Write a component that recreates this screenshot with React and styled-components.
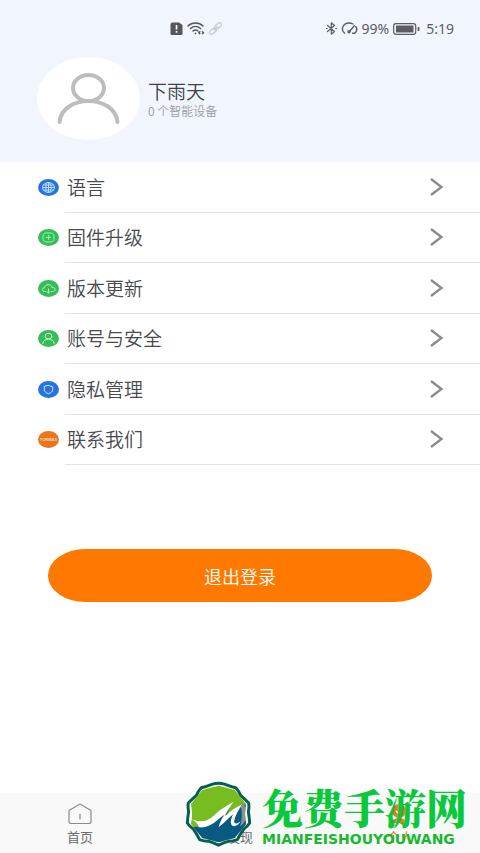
import React from "react";
import styled, { createGlobalStyle } from "styled-components";

const GlobalStyle = createGlobalStyle`
  * { box-sizing: border-box; }
  body {
    margin: 0;
    background: #fff;
    font-family: "Noto Sans CJK SC", sans-serif;
    font-weight: 350;
    color: #4f5156;
  }
  button { font-family: inherit; font-weight: inherit; border: 0; cursor: pointer; }
`;

const Screen = styled.div`
  display: flex;
  flex-direction: column;
  min-height: 100vh;
`;

const Header = styled.header`
  background: #f1f5fe;
  padding-bottom: 22px;
`;

const StatusBar = styled.div`
  display: flex;
  justify-content: space-between;
  align-items: center;
  height: 57px;
  padding: 0 26px 0 170px;
  color: #5b5d62;
  font: 400 14px/20px "Noto Sans", sans-serif;
`;

const StatusGroup = styled.div`
  display: flex;
  align-items: center;
  gap: 4px;
`;

const Clock = styled.time`
  margin-left: 2px;
`;

const Profile = styled.div`
  display: flex;
  align-items: center;
  gap: 8px;
  padding-left: 37px;
`;

const AvatarIcon = styled.svg`
  display: block;
  width: 103px;
  height: 83px;
`;

const UserName = styled.h1`
  margin: 0;
  font-size: 19px;
  line-height: 24px;
  font-weight: 350;
  color: #404248;
`;

const DeviceCount = styled.p`
  margin: 0;
  font-size: 12px;
  line-height: 16px;
  color: #999da6;
`;

const Menu = styled.nav`
  display: grid;
  grid-auto-rows: 1fr;
  min-height: 303px;
`;

const MenuRow = styled.button`
  display: flex;
  align-items: stretch;
  padding: 0 0 0 38px;
  background: none;
  text-align: left;
`;

const Badge = styled.svg`
  flex: none;
  align-self: center;
  width: 21px;
  height: 17px;
  margin-right: 6px;
`;

const RowBody = styled.span`
  flex: 1;
  display: flex;
  align-items: center;
  justify-content: space-between;
  padding: 0 36px 0 2px;
  border-bottom: 1px solid #e3e3e5;
  font-size: 19px;
  line-height: 26px;
  color: #484a4e;
`;

const LogoutButton = styled.button`
  height: 53px;
  margin: 84px 48px 40px;
  border-radius: 38px / 27px;
  background: #ff7900;
  color: #fff;
  font-size: 18px;
  line-height: 24px;
`;

const TabBar = styled.nav`
  position: relative;
  display: grid;
  grid-template-columns: repeat(3, 1fr);
  height: 60px;
  margin-top: auto;
  background: #f9f9f9;
`;

const Tab = styled.button`
  display: flex;
  flex-direction: column;
  align-items: center;
  gap: 3px;
  padding: 9px 0 0;
  background: none;
  color: ${(p) => (p.$active ? "#f47328" : "#6b6c70")};
  font-size: 13px;
  font-weight: 400;
  line-height: 16px;
`;

const Watermark = styled.div`
  position: absolute;
  right: 13px;
  bottom: 6px;
  display: flex;
  align-items: center;
  gap: 10px;
  color: #08c83c;
  pointer-events: none;
`;

const WatermarkLogo = styled.svg`
  width: 67px;
  height: 66px;
`;

const WatermarkText = styled.div`
  white-space: nowrap;
`;

const WatermarkTitle = styled.div`
  font: 900 41px/48px "Noto Serif CJK SC", "Noto Sans CJK SC", serif;
`;

const WatermarkUrl = styled.div`
  margin-top: 2px;
  font: 700 14px/12px "DejaVu Sans", sans-serif;
  color: #16b92f;
`;

const line = {
  fill: "none",
  stroke: "currentColor",
  strokeLinecap: "round",
  strokeLinejoin: "round",
};

const glyphs = {
  globe: (
    <>
      <ellipse cx="10.5" cy="8.5" rx="6" ry="5" />
      <ellipse cx="10.5" cy="8.5" rx="2.7" ry="5" />
      <path d="M4.5 8.5h12M10.5 3.5v10M5.5 6h10M5.5 11h10" />
    </>
  ),
  chip: (
    <>
      <rect x="5" y="4" width="11" height="9" rx="3" strokeDasharray="3 .7" />
      <path d="M10.5 6.3v4M8.2 8.3h4.6" />
    </>
  ),
  cloud: (
    <>
      <path d="M8 11.5H6.7C3.7 11.5 3.8 7.7 6.7 7.7 7 3.8 13 3.5 14 7.3c4-.1 4 4.2.7 4.2H13" />
      <path d="M10.5 9v4M9 11.8l1.5 1.2 1.5-1.2" />
    </>
  ),
  person: (
    <>
      <ellipse cx="10.5" cy="6.2" rx="3.4" ry="2.9" />
      <path d="M4.8 13.5c.5-6 10.9-6 11.4 0" />
    </>
  ),
  shield: <path d="M10.5 4.5l4.2 1.2v3.2c0 1.8-2 3-4.2 3.8-2.2-.8-4.2-2-4.2-3.8V5.7z" />,
};

const items = [
  { label: "语言", icon: "globe", color: "#2874df", ink: "#b9dcff" },
  { label: "固件升级", icon: "chip", color: "#38bc5b", ink: "#8dff9a" },
  { label: "版本更新", icon: "cloud", color: "#38bc5b", ink: "#a3ffb0" },
  { label: "账号与安全", icon: "person", color: "#38bc5b", ink: "#c2ffcc" },
  { label: "隐私管理", icon: "shield", color: "#2874df", ink: "#cae3ff" },
  { label: "联系我们", icon: "brand", color: "#e8761f", ink: "#ffd9b0" },
];

function MenuBadge({ icon, color, ink }) {
  return (
    <Badge viewBox="0 0 21 17" aria-hidden="true">
      <ellipse cx="10.5" cy="8.5" rx="10.5" ry="8.5" fill={color} />
      {icon === "brand" ? (
        <text x="10.5" y="10" textAnchor="middle" fontSize="4" fontWeight="700" fontFamily="Liberation Sans, sans-serif" fill={ink}>TORMAS</text>
      ) : (
        <g {...line} stroke={ink} strokeWidth="1">{glyphs[icon]}</g>
      )}
    </Badge>
  );
}

function Chevron() {
  return (
    <svg width="15" height="18" viewBox="0 0 15 18" aria-hidden="true">
      <path d="M2 1l10.5 8L2 17" fill="none" stroke="#8b8b8d" strokeWidth="2.3" />
    </svg>
  );
}

function SimIcon() {
  return (
    <svg width="13" height="13" viewBox="0 0 13 13" aria-hidden="true">
      <path d="M2.5 0.5H9L12.5 3v8.500q0 1.500-1.500 1.500H2Q.5 13 .5 11.500v-9q0-2 2-2z" fill="#55575b" />
      <path d="M6.500 3v4.500M6.500 9v1.700" stroke="#fff" strokeWidth="1.600" />
    </svg>
  );
}

function WifiIcon() {
  return (
    <svg width="18" height="13" viewBox="0 0 18 13" aria-hidden="true">
      <g {...line} stroke="#55575b" strokeWidth="1.500">
        <path d="M1 4c4-4 11-4 15 0M3.500 6.500c3-2.700 7-2.700 10 0M6 9c1.500-1.300 3.500-1.300 5 0" />
        <path d="M8.500 11.300v.1M12.800 9.800l-1 .9 1 .9M15.500 9.800l1 .9-1 .9" />
      </g>
    </svg>
  );
}

function LinkIcon() {
  return (
    <svg width="13" height="13" viewBox="0 0 13 13" aria-hidden="true">
      <g fill="none" stroke="#c3c6ce" strokeWidth="1.200">
        <rect x="5.500" y="2" width="7.500" height="4" rx="2" transform="rotate(-42 9 4)" />
        <rect x="0" y="7" width="7.500" height="4" rx="2" transform="rotate(-42 4 9)" />
        <path d="M4.500 8.500l4-4" />
      </g>
    </svg>
  );
}

function BluetoothIcon() {
  return (
    <svg width="11" height="13" viewBox="0 0 11 13" aria-hidden="true">
      <path d="M1.500 3.500l7 6-3.200 2.700V.8l3.200 2.700-7 6" {...line} strokeWidth="1.200" />
      <path d="M.5 6.500h.6M9.700 6.500h.6" {...line} strokeWidth="1.200" />
    </svg>
  );
}

function GaugeIcon() {
  return (
    <svg width="17" height="13" viewBox="0 0 17 13" aria-hidden="true">
      <g {...line} strokeWidth="1.400">
        <path d="M3.500 11.300C-1 7 2.500 1 8 1c1.700 0 3 .4 4 1M14.800 4.500c1.700 2.500.8 5.200-1.200 6.800h-2" />
        <path d="M8.500 9.500l4.800-5.800" />
        <circle cx="8" cy="9.700" r="1" />
      </g>
    </svg>
  );
}

function BatteryIcon() {
  return (
    <svg width="27" height="12" viewBox="0 0 27 12" aria-hidden="true">
      <rect x=".7" y=".7" width="22" height="10.600" rx="2.200" fill="none" stroke="currentColor" strokeWidth="1.200" />
      <rect x="3" y="2.500" width="17.500" height="7" fill="currentColor" />
      <path d="M25.500 4v4" stroke="currentColor" strokeWidth="1.800" />
    </svg>
  );
}

function HomeIcon() {
  return (
    <svg width="26" height="24" viewBox="0 0 26 24" aria-hidden="true">
      <path d="M2 8.500L13 2l11 6.500v11q0 2-2 2H4q-2 0-2-2zM13 12v5" {...line} stroke="#8a8b8e" strokeWidth="1.200" />
    </svg>
  );
}

function DiscoverIcon() {
  return (
    <svg width="26" height="24" viewBox="0 0 26 24" aria-hidden="true">
      <circle cx="11" cy="12" r="8" {...line} />
      <path d="M17 17l6 3" {...line} strokeWidth="2" />
    </svg>
  );
}

function ProfileIcon() {
  return (
    <svg width="26" height="24" viewBox="0 0 26 24" aria-hidden="true">
      <ellipse cx="12" cy="9" rx="7" ry="7" fill="#f47328" />
      <path d="M5 21q1-5 7-5t7 5z" fill="#f47328" />
      <path d="M9 9q3 4 6 0" fill="none" stroke="#fff" strokeWidth="1.500" />
    </svg>
  );
}

function SiteLogo() {
  return (
    <WatermarkLogo viewBox="42 33 202 198" aria-hidden="true">
      <defs>
        <clipPath id="logo-inner">
          <path d="M143 47Q167 52 192 60 208 80 226 102 220 132 226 162 208 184 192 204 167 210 143 217 119 210 94 204 78 184 60 162 66 132 60 102 78 80 94 60 119 52 143 47z" />
        </clipPath>
      </defs>
      <path
        d="M125 42Q143 36 161 42 178 49 195 53 205 64 209 75 222 87 234 99 236 112 233 125 236 142 237 159 230 170 219 177 209 192 200 209 187 214 174 214 158 219 143 226 128 219 112 214 99 214 86 209 77 192 67 177 56 170 49 159 50 142 53 125 50 112 52 99 64 87 77 75 81 64 91 53 108 49 125 42z"
        fill="#fff"
        stroke="#075e54"
        strokeWidth="9"
        strokeLinejoin="round"
      />
      <g clipPath="url(#logo-inner)">
        <path d="M40 30h210v200H40z" fill="#78bd20" />
        <path d="M56 170C102 176 126 150 150 122l28-12-10 26 46-36 36 20v120H56z" fill="#085a82" />
        <path
          d="M56 144C94 164 116 150 134 132 149 116 170 107 188 95 176 113 168 126 162 139 180 122 198 110 216 101 202 120 193 138 190 154 191 164 201 161 210 154 199 172 181 174 180 157 180 148 184 139 188 132 172 145 160 159 143 172 147 156 154 144 161 134 138 148 120 176 84 172 80 160 70 152 56 144z"
          fill="#fff"
        />
        <path d="M216 98q18 24 8 52-6 14-16 20 10-32 2-62z" fill="#8a9293" />
      </g>
    </WatermarkLogo>
  );
}

export default function App() {
  return (
    <>
      <GlobalStyle />
      <Screen>
        <Header>
          <StatusBar>
            <StatusGroup><SimIcon /><WifiIcon /><LinkIcon /></StatusGroup>
            <StatusGroup>
              <BluetoothIcon />
              <GaugeIcon />
              <span>99%</span>
              <BatteryIcon />
              <Clock>5:19</Clock>
            </StatusGroup>
          </StatusBar>
          <Profile>
            <AvatarIcon viewBox="0 0 103 83" aria-hidden="true">
              <ellipse cx="51.500" cy="41.500" rx="51.500" ry="41.500" fill="#fff" />
              <g fill="none" stroke="#bdbdbd" strokeWidth="4" strokeLinecap="round">
                <ellipse cx="51.500" cy="31" rx="15.500" ry="13" />
                <path d="M22.500 65c3-28 55-28 58 0" />
              </g>
            </AvatarIcon>
            <div>
              <UserName>下雨天</UserName>
              <DeviceCount>0 个智能设备</DeviceCount>
            </div>
          </Profile>
        </Header>
        <Menu>
          {items.map((item) => (
            <MenuRow key={item.label} type="button">
              <MenuBadge {...item} />
              <RowBody>{item.label}<Chevron /></RowBody>
            </MenuRow>
          ))}
        </Menu>
        <LogoutButton type="button">退出登录</LogoutButton>
        <TabBar>
          <Tab type="button"><HomeIcon />首页</Tab>
          <Tab type="button"><DiscoverIcon />发现</Tab>
          <Tab type="button" $active><ProfileIcon />个人</Tab>
          <Watermark>
            <SiteLogo />
            <WatermarkText>
              <WatermarkTitle>免费手游网</WatermarkTitle>
              <WatermarkUrl>MIANFEISHOUYOUWANG</WatermarkUrl>
            </WatermarkText>
          </Watermark>
        </TabBar>
      </Screen>
    </>
  );
}
